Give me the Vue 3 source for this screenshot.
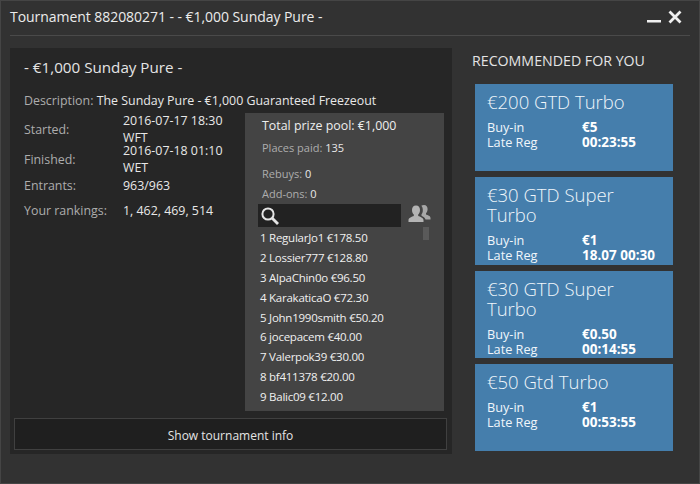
<script setup>
const infoRows = [
  { label: 'Started:', value: '2016-07-17 18:30 WFT', cls: 'dateRow' },
  { label: 'Finished:', value: '2016-07-18 01:10 WET', cls: 'dateRow' },
  { label: 'Entrants:', value: '963/963', cls: 'entrants' },
  { label: 'Your rankings:', value: '1, 462, 469, 514', cls: 'rankings' },
];

const players = [
  '1 RegularJo1 €178.50',
  '2 Lossier777 €128.80',
  '3 AlpaChin0o €96.50',
  '4 KarakaticaO €72.30',
  '5 John1990smith €50.20',
  '6 jocepacem €40.00',
  '7 Valerpok39 €30.00',
  '8 bf411378 €20.00',
  '9 Balic09 €12.00',
];

const cards = [
  { name: '€200 GTD Turbo', buyIn: '€5', lateReg: '00:23:55' },
  { name: '€30 GTD Super Turbo', buyIn: '€1', lateReg: '18.07 00:30' },
  { name: '€30 GTD Super Turbo', buyIn: '€0.50', lateReg: '00:14:55' },
  { name: '€50 Gtd Turbo', buyIn: '€1', lateReg: '00:53:55' },
];
</script>

<template>
  <div class="win">
    <header class="titleBar">
      <div class="title">Tournament 882080271 - - €1,000 Sunday Pure -</div>
      <div class="winBtns">
        <svg width="14" height="14" viewBox="0 0 14 14"><rect x="0" y="10" width="14" height="2.500" fill="#f0f0f0" /></svg>
        <svg width="14" height="14" viewBox="0 0 14 14"><path d="M1.500 1.500 L12.500 12.500 M12.500 1.500 L1.500 12.500" stroke="#f0f0f0" stroke-width="2.800" /></svg>
      </div>
    </header>

    <div class="body">
      <section class="panel">
        <h1 class="heading">- €1,000 Sunday Pure -</h1>
        <div class="desc"><span class="lbl">Description:</span> The Sunday Pure - €1,000 Guaranteed Freezeout</div>

        <div class="middle">
          <div class="info">
            <div v-for="row in infoRows" :key="row.label" class="infoRow" :class="row.cls">
              <div class="lbl infoLbl">{{ row.label }}</div>
              <div class="infoVal">{{ row.value }}</div>
            </div>
          </div>

          <div class="prize">
            <div class="pool">Total prize pool: €1,000</div>
            <div class="stat paid"><span class="lbl">Places paid:</span> 135</div>
            <div class="stat rebuys"><span class="lbl">Rebuys:</span> 0</div>
            <div class="stat addons"><span class="lbl">Add-ons:</span> 0</div>
            <div class="searchRow">
              <div class="search">
                <svg width="20" height="20" viewBox="0 0 20 20">
                  <circle cx="8" cy="8" r="5.600" fill="none" stroke="#e4e4e4" stroke-width="2" />
                  <path d="M12 12 L18 18" stroke="#e4e4e4" stroke-width="2.800" />
                </svg>
              </div>
              <svg class="people" width="23" height="20" viewBox="0 0 23 20">
                <path d="M16 2c2.400 0 3.600 1.800 3.600 4 0 1.800-.7 3.300-1.600 4.200v1.300c1.500.7 4.500 1.300 4.500 3.500v1.500h-5c-.4-2-2.300-2.900-4-3.700v-1.500c.9-1 1.400-2.500 1.300-4.500-.1-2-.6-3.400-1.500-4.100.6-.5 1.500-.7 2.700-.7z" fill="#a8a8a8" />
                <path d="M8 2.500c2.700 0 4 2 4 4.500 0 2-.8 3.600-1.800 4.500v1.500c1.800.8 5.300 1.600 5.300 4v2H.5v-2c0-2.400 3.500-3.200 5.300-4v-1.500C4.800 10.600 4 9 4 7c0-2.500 1.300-4.500 4-4.500z" fill="#b4b4b4" />
              </svg>
            </div>
            <div class="listWrap">
              <div class="list">
                <div v-for="p in players" :key="p" class="player">{{ p }}</div>
              </div>
              <div class="thumb"></div>
            </div>
          </div>
        </div>

        <button class="infoBtn">Show tournament info</button>
      </section>

      <aside class="side">
        <div class="sideTitle">RECOMMENDED FOR YOU</div>
        <div class="cards">
          <div v-for="(c, i) in cards" :key="i" class="card">
            <div class="cardName">{{ c.name }}</div>
            <div class="cardGrid">
              <span>Buy-in</span><b>{{ c.buyIn }}</b>
              <span>Late Reg</span><b>{{ c.lateReg }}</b>
            </div>
          </div>
        </div>
      </aside>
    </div>
  </div>
</template>

<style scoped>
.win {
  width: 700px;
  height: 484px;
  box-sizing: border-box;
  background: #323232;
  border: 1px solid #454545;
  color: #e8e8e8;
  font-family: "Open Sans", "Noto Sans", sans-serif;
  font-size: 12px;
  overflow: hidden;
}
.titleBar {
  height: 34px;
  margin: 0 9px;
  display: flex;
  align-items: center;
  justify-content: space-between;
  border-bottom: 1px solid #4a4a4a;
}
.title {
  font-size: 14px;
  letter-spacing: -0.05px;
  color: #ececec;
  margin-top: -3px;
}
.winBtns {
  display: flex;
  gap: 7px;
  margin-right: 8px;
  margin-top: -2px;
}
.body {
  display: flex;
  padding: 12px 0 0 9px;
}
.panel {
  width: 442px;
  height: 406px;
  box-sizing: border-box;
  background: #262626;
  padding: 0 4px;
  display: flex;
  flex-direction: column;
}
.heading {
  margin: 9px 0 0 10px;
  font-size: 15.200px;
  font-weight: 400;
  line-height: 20px;
  color: #e4e4e4;
}
.lbl {
  color: #adadad;
}
.desc {
  margin: 16px 0 0 10px;
  font-size: 12.400px;
  line-height: 16px;
}
.middle {
  display: flex;
  height: 298px;
  margin-top: 4px;
}
.info {
  width: 231px;
  padding: 1px 0 0 10px;
  box-sizing: border-box;
  font-size: 12.400px;
}
.infoRow {
  display: flex;
  align-items: center;
}
.infoLbl {
  width: 99px;
  flex: none;
}
.infoVal {
  width: 108px;
  line-height: 17px;
}
.dateRow {
  height: 30px;
}
.entrants {
  height: 25px;
  margin-top: -1px;
}
.rankings {
  height: 25px;
}
.prize {
  width: 199px;
  background: #444444;
  padding: 0 0 0 4px;
  box-sizing: border-box;
}
.pool {
  margin: 4px 0 0 13px;
  font-size: 12.400px;
  line-height: 17px;
  color: #eeeeee;
}
.stat {
  margin-left: 13px;
  font-size: 11px;
  line-height: 15px;
}
.paid {
  margin-top: 6px;
}
.rebuys {
  margin-top: 11px;
}
.addons {
  margin-top: 5px;
}
.searchRow {
  display: flex;
  align-items: center;
  margin: 3px 0 0 9px;
}
.search {
  width: 143px;
  height: 23px;
  background: #222222;
  display: flex;
  align-items: center;
  padding-left: 2px;
  box-sizing: border-box;
}
.people {
  margin: -6px 0 0 7px;
}
.listWrap {
  display: flex;
}
.list {
  width: 163px;
  margin-left: 11px;
  padding-top: 1px;
}
.player {
  height: 19.900px;
  line-height: 19px;
  font-size: 11.500px;
  letter-spacing: -0.25px;
  color: #f0f0f0;
  white-space: nowrap;
}
.thumb {
  width: 6px;
  height: 13px;
  background: #5a5a5a;
}
.infoBtn {
  margin: 7px 0 0 0;
  width: 433px;
  height: 32px;
  background: #1f1f1f;
  border: 1px solid #404040;
  color: #e4e4e4;
  font-family: inherit;
  font-size: 12px;
  padding: 2px 0 0;
}
.side {
  margin-left: 20px;
  width: 210px;
}
.sideTitle {
  font-size: 14.200px;
  line-height: 20px;
  margin-top: 3px;
  color: #e4e4e4;
}
.cards {
  margin: 13px 0 0 3px;
  display: flex;
  flex-direction: column;
  gap: 6px;
}
.card {
  width: 198px;
  height: 87.340px;
  box-sizing: border-box;
  background: #457eac;
  padding: 8px 0 0 12px;
  color: #f0f6fb;
}
.cardName {
  font-size: 18.500px;
  font-weight: 300;
  line-height: 20px;
  width: 170px;
}
.cardGrid {
  display: grid;
  grid-template-columns: 95px 1fr;
  font-size: 12.700px;
  line-height: 15px;
  margin-top: 8px;
}
.cardGrid b {
  font-size: 13.500px;
  font-weight: 700;
  color: #ffffff;
}
</style>

<style>
html, body {
  margin: 0;
  background: #323232;
}
</style>
